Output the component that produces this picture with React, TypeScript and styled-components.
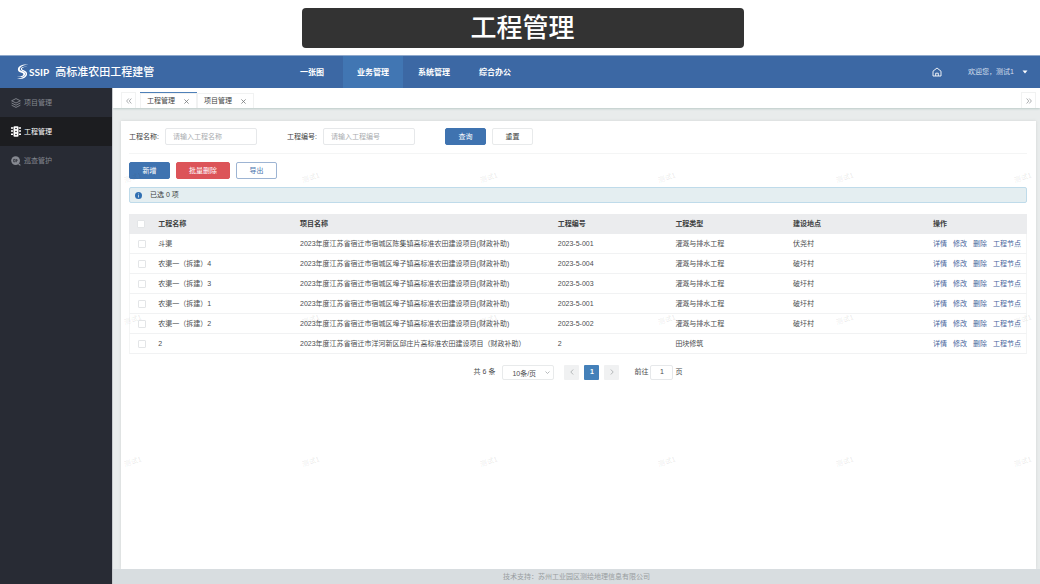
import React from "react";
import styled, { createGlobalStyle } from "styled-components";

const GlobalStyle = createGlobalStyle`
  *, *::before, *::after { box-sizing: border-box; }
  body {
    margin: 0;
    background: #fff;
    color: #4a4c4e;
    font: 7px/16px "Liberation Sans", "Noto Sans CJK SC", sans-serif;
  }
  button, input, select { font: inherit; color: inherit; margin: 0; }
  a { color: inherit; text-decoration: none; }
`;

const Page = styled.div`
  display: flex;
  flex-direction: column;
  min-height: 100vh;
`;

const Banner = styled.h1`
  width: 42.5%;
  height: 40px;
  margin: 8px 0 7px 29%;
  border-radius: 4px;
  background: #333;
  color: #fff;
  font-size: 26px;
  font-weight: 500;
  line-height: 40px;
  text-align: center;
`;

const Header = styled.header`
  display: flex;
  align-items: center;
  height: 33px;
  border-top: 1px solid #8fa9cc;
  background: #3c68a4;
  color: #fff;
`;

const Brand = styled.div`
  display: flex;
  align-items: center;
  flex: 0 0 286px;
  padding-left: 16px;
`;

const BrandMark = styled.span`
  margin-right: 6px;
  font: 700 10px/16px Lato, sans-serif;
`;

const BrandName = styled.span`
  font-size: 11px;
  font-weight: 500;
`;

const Nav = styled.nav`
  display: flex;
  flex: 1;
  gap: 1px;
  height: 100%;
`;

const NavLink = styled.a<{ $active?: boolean }>`
  min-width: 56px;
  padding: 0 14px;
  background: ${(p) => (p.$active ? "#4176b3" : "transparent")};
  font-size: 8px;
  font-weight: 700;
  line-height: 33px;
  white-space: nowrap;
`;

const HomeLink = styled.a`
  display: flex;
  margin-right: 26px;
`;

const UserButton = styled.button`
  display: flex;
  align-items: center;
  gap: 8px;
  margin-right: 12px;
  padding: 0;
  border: 0;
  background: none;
  color: #d3deec;
`;

const Body = styled.div`
  display: flex;
  flex: 1;
`;

const Sidebar = styled.nav`
  flex: 0 0 112px;
  background: #282b34;
`;

const SideLink = styled.a<{ $active?: boolean }>`
  display: flex;
  align-items: center;
  gap: 3px;
  height: 29px;
  padding-left: 11px;
  background: ${(p) => (p.$active ? "#1c1d20" : "transparent")};
  color: ${(p) => (p.$active ? "#fff" : "#868991")};
`;

const Main = styled.main`
  position: relative;
  display: flex;
  flex: 1;
  flex-direction: column;
  min-width: 0;
  overflow: hidden;
  border-left: 1px solid #c9cccf;
  background: #e9ecec;
`;

const TabBar = styled.div`
  display: flex;
  align-items: flex-end;
  height: 20px;
  padding: 0 4px 0 8px;
  background: #fff;
  box-shadow: 0 1px 2px #bccac8;
`;

const TabScroll = styled.button`
  display: flex;
  align-items: center;
  justify-content: center;
  width: 15px;
  height: 16px;
  padding: 0;
  border: 1px solid #f1f2f2;
  border-bottom: 0;
  background: #fff;
  color: #8b8e91;
`;

const Tabs = styled.div`
  display: flex;
  flex: 1;
  padding-left: 4px;
`;

const Tab = styled.div<{ $active?: boolean }>`
  display: flex;
  align-items: center;
  gap: 8px;
  height: 15px;
  padding: 0 6px;
  border: solid #f1f2f2;
  border-width: 1px 1px 0;
  background: #fff;
  box-shadow: ${(p) => (p.$active ? "0 -1px 0 #4e80b8" : "none")};
  color: #3c3e40;
`;

const CloseButton = styled.button`
  display: flex;
  padding: 1px;
  border: 0;
  background: none;
  color: #75787a;
`;

const Card = styled.section`
  flex: 1;
  margin: 13px 4px 0 8px;
  padding: 7px 9px 8px 8px;
  background: #fff;
  box-shadow: 0 0 3px #d3d6d6;
`;

const SearchForm = styled.form`
  display: flex;
  align-items: center;
  height: 26px;
  padding-bottom: 8px;
  border-bottom: 1px solid #f4f5f5;
`;

const Field = styled.label`
  display: flex;
  align-items: center;
  gap: 6px;
  margin-right: 30px;
  color: #3c3e40;
  white-space: nowrap;
`;

const TextInput = styled.input`
  width: 92px;
  height: 17px;
  padding: 0 7px;
  border: 1px solid #e6e8ea;
  border-radius: 2px;
  background: #fff;
  outline: 0;
  &::placeholder { color: #a9acaf; opacity: 1; }
`;

const tones = {
  primary: { bg: "#3f73b0", line: "#3f73b0", text: "#fff" },
  danger: { bg: "#dc5459", line: "#dc5459", text: "#fff" },
  outline: { bg: "#fff", line: "#9db4d3", text: "#4a75ad" },
  plain: { bg: "#fff", line: "#e8eaeb", text: "#3c3e40" },
};

const Button = styled.button<{ $tone: keyof typeof tones }>`
  min-width: 41px;
  height: 17px;
  margin-right: 6px;
  padding: 0 12px;
  border: 1px solid ${(p) => tones[p.$tone].line};
  border-radius: 2px;
  background: ${(p) => tones[p.$tone].bg};
  color: ${(p) => tones[p.$tone].text};
  line-height: 15px;
  white-space: nowrap;
`;

const Toolbar = styled.div`
  display: flex;
  padding: 8px 0;
`;

const Notice = styled.div`
  display: flex;
  align-items: center;
  gap: 8px;
  height: 16px;
  padding-left: 5px;
  border: 1px solid #bfdbea;
  border-radius: 2px;
  background: #e4eef1;
  color: #3c3e40;
`;

const Table = styled.table`
  width: 100%;
  margin-top: 11px;
  border-spacing: 0;
  table-layout: fixed;
  text-align: left;
`;

const HeadCell = styled.th`
  height: 20px;
  padding: 0 4px;
  background: #ebecee;
  color: #3c3e40;
  font-weight: 700;
`;

const Cell = styled.td`
  height: 20px;
  padding: 0 4px;
  border-bottom: 1px solid #f1f2f3;
  white-space: nowrap;
  &:first-child { border-left: 1px solid #f4f5f5; }
  &:last-child { border-right: 1px solid #f4f5f5; }
`;

const Checkbox = styled.input`
  display: block;
  width: 8px;
  height: 8px;
  margin: 0 0 0 4px;
  appearance: none;
  border: 1px solid #e3e5e7;
  border-radius: 1px;
  background: #fff;
`;

const Actions = styled.div`
  display: flex;
  gap: 6px;
  color: #47659c;
`;

const Pagination = styled.div`
  display: flex;
  align-items: center;
  justify-content: center;
  margin-top: 10px;
`;

const SelectBox = styled.span`
  position: relative;
  margin: 0 10px 0 7px;
`;

const Select = styled.select`
  display: block;
  width: 52px;
  height: 15px;
  padding: 0 9px;
  appearance: none;
  border: 1px solid #e8eaeb;
  border-radius: 2px;
  background: #fff;
  outline: 0;
`;

const SelectArrow = styled.svg`
  position: absolute;
  top: 5px;
  right: 4px;
  pointer-events: none;
`;

const PageButton = styled.button<{ $current?: boolean }>`
  display: flex;
  align-items: center;
  justify-content: center;
  width: 15px;
  height: 15px;
  margin-right: 5px;
  padding: 0;
  border: 0;
  border-radius: 1px;
  background: ${(p) => (p.$current ? "#4480b9" : "#f0f1f2")};
  color: ${(p) => (p.$current ? "#fff" : "#a5a8ab")};
  font-weight: 700;
`;

const Jump = styled.label`
  display: flex;
  align-items: center;
  gap: 2px;
  margin-left: 10px;
`;

const JumpInput = styled(TextInput)`
  width: 23px;
  height: 15px;
  padding: 0;
  text-align: center;
`;

const Footer = styled.footer`
  height: 15px;
  background: #d8dde0;
  color: #989da1;
  line-height: 15px;
  text-align: center;
`;

const WatermarkLayer = styled.div`
  position: absolute;
  inset: 54px -160px 0 -69px;
  display: grid;
  grid-template-columns: repeat(auto-fill, 178px);
  grid-auto-rows: 142px;
  overflow: hidden;
  pointer-events: none;
  color: rgba(60, 60, 50, 0.12);
`;

const Watermark = styled.span`
  display: grid;
  height: 72px;
  place-items: center;
  transform: rotate(-18deg);
`;

const LogoIcon = () => (
  <svg width="13" height="16" viewBox="0 0 13 16" fill="#fff" aria-hidden="true">
    <path d="M12.400.8C7.500-.2 2 1.900 1.900 5.400c-.1 2.500 2.600 3 4.400 3.600 1.700.6 1.200 2.300-.6 3.100-1.200.5-2.900.7-4.500.4 3 1.200 7.500.6 8-2.300.3-2-1.500-2.700-3.200-3.200-1.600-.5-2.600-1.200-2.100-2.500C4.800 2.200 8.600.9 12.400.8Z" />
    <path d="M11.800 3.200C9 2.700 6.300 3.300 6 4.600c-.3 1.100 1 1.400 2.300 1.900 2 .8 3.100 2.100 2.700 4-.6 3.300-5.200 5.300-10.200 4.100 3.800.1 7.300-1.100 8.500-3.500.8-1.700.1-3-1.700-3.700C5.800 6.700 4.600 6 4.800 4.700c.3-1.900 3.900-2.500 7-1.500Z" />
  </svg>
);

const HomeIcon = () => (
  <svg width="10" height="10" viewBox="0 0 10 10" fill="none" stroke="#fff" strokeWidth=".9" aria-hidden="true">
    <path d="M1 9V4.200L5 1l4 3.200V9H1Z" strokeLinejoin="round" />
    <path d="M3.700 9V6.200h2.600V9" />
  </svg>
);

const LayersIcon = () => (
  <svg width="10" height="10" viewBox="0 0 10 10" fill="none" stroke="currentColor" strokeWidth=".9" strokeLinejoin="round" aria-hidden="true">
    <path d="m5 .6 4.400 2.200L5 5 .6 2.800 5 .6Z" />
    <path d="M.6 5 5 7.200 9.400 5M.6 7.200 5 9.400l4.400-2.200" />
  </svg>
);

const SignalIcon = () => (
  <svg width="10" height="11" viewBox="0 0 10 11" aria-hidden="true">
    <rect x="2.500" y=".3" width="5" height="10.400" rx="1" fill="currentColor" />
    <path d="M0 1.900h2M0 5.100h2M0 8.300h2M8 1.900h2M8 5.100h2M8 8.300h2" stroke="currentColor" strokeWidth="1.500" />
    <g fill="#1c1d20">
      <circle cx="5" cy="2.500" r=".8" />
      <circle cx="5" cy="5.500" r=".8" />
      <circle cx="5" cy="8.500" r=".8" />
    </g>
  </svg>
);

const InspectIcon = () => (
  <svg width="10" height="10" viewBox="0 0 10 10" aria-hidden="true">
    <circle cx="4.600" cy="4.600" r="4.400" fill="currentColor" />
    <path d="m7.500 7.800 1.900 1.600" stroke="currentColor" strokeWidth="1.200" />
    <path d="M2.600 3.400h1.600v2.400H2.600zM5.400 3v3.200M5.400 4.200h1.500" fill="none" stroke="#282b34" strokeWidth=".7" />
  </svg>
);

const InfoIcon = () => (
  <svg width="7" height="7" viewBox="0 0 8 8" aria-hidden="true">
    <circle cx="4" cy="4" r="4" fill="#2f6fb2" />
    <path d="M4 1.700v1M4 3.500v2.800" stroke="#fff" strokeWidth=".8" />
  </svg>
);

const CloseIcon = () => (
  <svg width="5" height="5" viewBox="0 0 5 5" stroke="currentColor" strokeWidth=".8" aria-hidden="true">
    <path d="m.4.4 4.200 4.200M4.600.4.4 4.600" />
  </svg>
);

const DoubleChevron = ({ right }: { right?: boolean }) => (
  <svg width="6" height="6" viewBox="0 0 6 6" fill="none" stroke="currentColor" strokeWidth=".7" aria-hidden="true">
    <path d={right ? "m.6.5 2.200 2.500L.6 5.500M3.200.5l2.200 2.500-2.200 2.500" : "M5.400.5 3.200 3l2.200 2.500M2.800.5.6 3l2.200 2.500"} />
  </svg>
);

const Chevron = ({ right }: { right?: boolean }) => (
  <svg width="4" height="6" viewBox="0 0 4 6" fill="none" stroke="currentColor" strokeWidth=".8" aria-hidden="true">
    <path d={right ? "m.8.5 2.400 2.500L.8 5.500" : "M3.200.5.8 3l2.400 2.500"} />
  </svg>
);

const navItems = ["一张图", "业务管理", "系统管理", "综合办公"];
const sideItems = [
  { label: "项目管理", Icon: LayersIcon },
  { label: "工程管理", Icon: SignalIcon },
  { label: "巡查管护", Icon: InspectIcon },
];
const tabs = ["工程管理", "项目管理"];
const columns = [
  { title: "工程名称", width: "15.8%" },
  { title: "项目名称", width: "28.7%" },
  { title: "工程编号", width: "13.1%" },
  { title: "工程类型", width: "13.1%" },
  { title: "建设地点", width: "15.6%" },
  { title: "操作", width: "10.9%" },
];
const actions = ["详情", "修改", "删除", "工程节点"];
const chenji = "2023年度江苏省宿迁市宿城区陈集镇高标准农田建设项目(财政补助)";
const buzi = "2023年度江苏省宿迁市宿城区埠子镇高标准农田建设项目(财政补助)";
const yanghe = "2023年度江苏省宿迁市洋河新区邱庄片高标准农田建设项目（财政补助）";
const irrigation = "灌溉与排水工程";
const rows = [
  ["斗渠", chenji, "2023-5-001", irrigation, "伏尧村"],
  ["农渠一（拆建）4", buzi, "2023-5-004", irrigation, "破圩村"],
  ["农渠一（拆建）3", buzi, "2023-5-003", irrigation, "破圩村"],
  ["农渠一（拆建）1", buzi, "2023-5-001", irrigation, "破圩村"],
  ["农渠一（拆建）2", buzi, "2023-5-002", irrigation, "破圩村"],
  ["2", yanghe, "2", "田块修筑", ""],
];

export default function App() {
  return (
    <Page>
      <GlobalStyle />
      <Banner>工程管理</Banner>
      <Header>
        <Brand>
          <LogoIcon />
          <BrandMark>SSIP</BrandMark>
          <BrandName>高标准农田工程建管</BrandName>
        </Brand>
        <Nav>
          {navItems.map((item) => (
            <NavLink key={item} href="#" $active={item === "业务管理"}>{item}</NavLink>
          ))}
        </Nav>
        <HomeLink href="#" aria-label="首页"><HomeIcon /></HomeLink>
        <UserButton type="button">
          欢迎您，测试1
          <svg width="6" height="4" viewBox="0 0 6 4" aria-hidden="true"><path d="M.5.5h5L3 3.500z" fill="#fff" /></svg>
        </UserButton>
      </Header>
      <Body>
        <Sidebar>
          {sideItems.map(({ label, Icon }) => (
            <SideLink key={label} href="#" $active={label === "工程管理"}>
              <Icon />
              {label}
            </SideLink>
          ))}
        </Sidebar>
        <Main>
          <TabBar>
            <TabScroll type="button" aria-label="向左"><DoubleChevron /></TabScroll>
            <Tabs>
              {tabs.map((tab, i) => (
                <Tab key={tab} $active={i === 0}>
                  {tab}
                  <CloseButton type="button" aria-label="关闭"><CloseIcon /></CloseButton>
                </Tab>
              ))}
            </Tabs>
            <TabScroll type="button" aria-label="向右"><DoubleChevron right /></TabScroll>
          </TabBar>
          <Card>
            <SearchForm>
              <Field>工程名称: <TextInput placeholder="请输入工程名称" /></Field>
              <Field>工程编号: <TextInput placeholder="请输入工程编号" /></Field>
              <Button type="button" $tone="primary">查询</Button>
              <Button type="button" $tone="plain">重置</Button>
            </SearchForm>
            <Toolbar>
              <Button type="button" $tone="primary">新增</Button>
              <Button type="button" $tone="danger">批量删除</Button>
              <Button type="button" $tone="outline">导出</Button>
            </Toolbar>
            <Notice><InfoIcon />已选 0 项</Notice>
            <Table>
              <colgroup>
                <col style={{ width: "2.8%" }} />
                {columns.map((c) => <col key={c.title} style={{ width: c.width }} />)}
              </colgroup>
              <thead>
                <tr>
                  <HeadCell><Checkbox type="checkbox" aria-label="全选" /></HeadCell>
                  {columns.map((c) => <HeadCell key={c.title}>{c.title}</HeadCell>)}
                </tr>
              </thead>
              <tbody>
                {rows.map((row, r) => (
                  <tr key={r}>
                    <Cell><Checkbox type="checkbox" aria-label={row[0]} /></Cell>
                    {row.map((value, c) => <Cell key={c}>{value}</Cell>)}
                    <Cell>
                      <Actions>
                        {actions.map((a) => <a key={a} href="#">{a}</a>)}
                      </Actions>
                    </Cell>
                  </tr>
                ))}
              </tbody>
            </Table>
            <Pagination>
              共 6 条
              <SelectBox>
                <Select aria-label="每页条数"><option>10条/页</option></Select>
                <SelectArrow width="5" height="5" viewBox="0 0 5 5" fill="none" stroke="#a5a8ab" strokeWidth=".8" aria-hidden="true">
                  <path d="m.5 1.500 2 2 2-2" />
                </SelectArrow>
              </SelectBox>
              <PageButton type="button" aria-label="上一页"><Chevron /></PageButton>
              <PageButton type="button" $current>1</PageButton>
              <PageButton type="button" aria-label="下一页"><Chevron right /></PageButton>
              <Jump>前往 <JumpInput defaultValue="1" /> 页</Jump>
            </Pagination>
          </Card>
          <Footer>技术支持：苏州工业园区测绘地理信息有限公司</Footer>
          <WatermarkLayer aria-hidden="true">
            {Array.from({ length: 18 }, (_, i) => <Watermark key={i}>测试1</Watermark>)}
          </WatermarkLayer>
        </Main>
      </Body>
    </Page>
  );
}
